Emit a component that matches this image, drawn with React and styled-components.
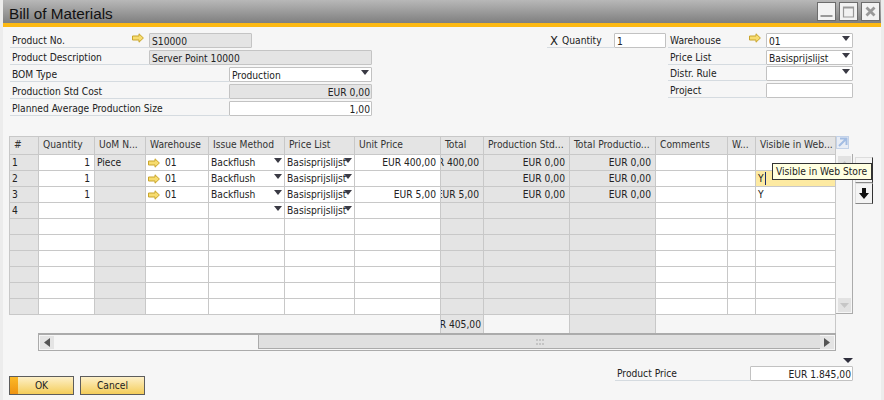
import React from 'react'
import styled, { createGlobalStyle } from 'styled-components'

const GlobalStyle = createGlobalStyle`
  html, body {
    margin: 0;
    padding: 0;
    background: #f6f6f6;
  }
  body {
    font-family: 'DejaVu Sans Condensed', 'DejaVu Sans', sans-serif;
    font-stretch: condensed;
    font-size: 10.2px;
    color: #222;
  }
`

const columns = [
  { title: '#', width: 29, gray: true },
  { title: 'Quantity', width: 56 },
  { title: 'UoM N...', width: 51, gray: true },
  { title: 'Warehouse', width: 63 },
  { title: 'Issue Method', width: 76 },
  { title: 'Price List', width: 70 },
  { title: 'Unit Price', width: 86 },
  { title: 'Total', width: 43, gray: true },
  { title: 'Production Std...', width: 86, gray: true },
  { title: 'Total Productio...', width: 86, gray: true },
  { title: 'Comments', width: 72 },
  { title: 'W...', width: 28 },
  { title: 'Visible in Web...', width: 80 },
]

const rows = [
  { n: 1, qty: 1, uom: 'Piece', wh: '01', issue: 'Backflush', list: 'Basisprijslijst', price: 'EUR 400,00', total: 'EUR 400,00', std: 'EUR 0,00', totalProd: 'EUR 0,00' },
  { n: 2, qty: 1, wh: '01', issue: 'Backflush', list: 'Basisprijslijst', std: 'EUR 0,00', totalProd: 'EUR 0,00', web: 'Y', active: true },
  { n: 3, qty: 1, wh: '01', issue: 'Backflush', list: 'Basisprijslijst', price: 'EUR 5,00', total: 'EUR 5,00', std: 'EUR 0,00', totalProd: 'EUR 0,00', web: 'Y' },
  { n: 4, list: 'Basisprijslijst', dropdown: true },
  {}, {}, {}, {}, {}, {},
]

const gridTemplate = columns.map((c) => `${c.width}px`).join(' ')

const LinkArrow = ({ className }) => (
  <svg className={className} width='12' height='10' viewBox='0 0 12 10'>
    <path
      d='M0.5 3 H7 V0.8 L11.4 5 L7 9.2 V7 H0.5 Z'
      fill='#f7dc6f'
      stroke='#c9a52c'
      strokeWidth='1'
    />
  </svg>
)

const Caret = ({ color = '#3a3a44', size = 8 }) => (
  <svg width={size} height='5' viewBox='0 0 9 5' preserveAspectRatio='none'>
    <path d='M0 0 H9 L4.5 5 Z' fill={color} />
  </svg>
)

const App = () => {
  return (
    <Window>
      <GlobalStyle />
      <TitleBar>
        <Title>Bill of Materials</Title>
        <WindowButtons>
          <WinButton>
            <svg width='13' height='13' viewBox='0 0 13 13'>
              <rect x='0.5' y='10' width='12' height='2' fill='#999' />
            </svg>
          </WinButton>
          <WinButton>
            <svg width='13' height='13' viewBox='0 0 13 13'>
              <path d='M1.5 2 H11.5 V12 H1.5 Z M1.5 3 H11.5' fill='none' stroke='#999' strokeWidth='1.2' />
            </svg>
          </WinButton>
          <WinButton>
            <svg width='13' height='13' viewBox='0 0 13 13'>
              <path d='M2.5 2.5 L10.5 10.5 M10.5 2.5 L2.5 10.5' stroke='#999' strokeWidth='2.8' />
            </svg>
          </WinButton>
        </WindowButtons>
      </TitleBar>
      <AccentStrip />

      <Form>
        <LeftForm>
          <FormRow>
            <Label $width={139}>Product No.</Label>
            <ArrowSlot><LinkArrow /></ArrowSlot>
            <Field $gray $width={103}>S10000</Field>
          </FormRow>
          <FormRow>
            <Label $width={139}>Product Description</Label>
            <Field $gray $width={223}>Server Point 10000</Field>
          </FormRow>
          <FormRow>
            <Label $width={219}>BOM Type</Label>
            <Field $width={143}>Production<FieldCaret><Caret /></FieldCaret></Field>
          </FormRow>
          <FormRow>
            <Label $width={219}>Production Std Cost</Label>
            <Field $gray $right $width={143}>EUR 0,00</Field>
          </FormRow>
          <FormRow>
            <Label $width={219}>Planned Average Production Size</Label>
            <Field $right $width={143}>1,00</Field>
          </FormRow>
        </LeftForm>

        <RightForm>
          <FormRow>
            <TimesSign>X</TimesSign>
            <Label $width={54}>Quantity</Label>
            <Field $width={52}>1</Field>
            <Gap />
            <Label $width={98}>Warehouse</Label>
            <ArrowSlot><LinkArrow /></ArrowSlot>
            <Field $width={87}>01<FieldCaret><Caret /></FieldCaret></Field>
          </FormRow>
          <IndentRow>
            <Label $width={98}>Price List</Label>
            <Field $width={87}>Basisprijslijst<FieldCaret><Caret /></FieldCaret></Field>
          </IndentRow>
          <IndentRow>
            <Label $width={98}>Distr. Rule</Label>
            <Field $width={87}><FieldCaret><Caret /></FieldCaret></Field>
          </IndentRow>
          <IndentRow>
            <Label $width={98}>Project</Label>
            <Field $width={87} />
          </IndentRow>
        </RightForm>
      </Form>

      <MatrixArea>
        <Matrix>
          {columns.map((c) => (
            <HeaderCell key={c.title}>{c.title}</HeaderCell>
          ))}
          {rows.map((r, i) => (
            <React.Fragment key={i}>
              <Cell $gray>{r.n}</Cell>
              <Cell $right>{r.qty}</Cell>
              <Cell $gray>{r.uom}</Cell>
              <Cell>
                {r.wh && <CellArrow><LinkArrow /></CellArrow>}
                {r.wh}
              </Cell>
              <Cell>
                {r.issue}
                {(r.issue || r.dropdown) && <CellCaret><Caret /></CellCaret>}
              </Cell>
              <Cell>
                {r.list}
                {r.list && <CellCaret><Caret /></CellCaret>}
              </Cell>
              <Cell $right>{r.price}</Cell>
              <Cell $gray $right>{r.total}</Cell>
              <Cell $gray $right>{r.std}</Cell>
              <Cell $gray $right>{r.totalProd}</Cell>
              <Cell />
              <Cell />
              <Cell $active={r.active}>
                {r.web}
                {r.active && <TextCaret />}
              </Cell>
            </React.Fragment>
          ))}
          <FooterBlank $span={7} />
          <FooterCell $gray>EUR 405,00</FooterCell>
          <FooterCell />
          <FooterCell $gray />
          <FooterEnd />
        </Matrix>

        <VerticalScroll>
          <ExpandIcon width='13' height='13' viewBox='0 0 13 13'>
            <rect x='0.5' y='0.5' width='12' height='12' fill='#e8edf5' stroke='#c3d2e8' />
            <path d='M4 2.5 H10.5 V9 M10 3 L3 10' fill='none' stroke='#a3bde3' strokeWidth='2' />
          </ExpandIcon>
          <ScrollTrack>
            <ScrollEnd><UpCaret><Caret color='#c6c6c6' size={9} /></UpCaret></ScrollEnd>
            <ScrollEnd><Caret color='#c6c6c6' size={9} /></ScrollEnd>
          </ScrollTrack>
        </VerticalScroll>

        <SideButtons>
          <SideButton $height={26} />
          <SideButton $height={21}>
            <svg width='10' height='11' viewBox='0 0 10 11'>
              <path d='M3 0 H7 V5 H10 L5 11 L0 5 H3 Z' fill='#111' />
            </svg>
          </SideButton>
        </SideButtons>

        <Tooltip>Visible in Web Store</Tooltip>
      </MatrixArea>

      <HorizontalScroll>
        <ArrowButton>
          <svg width='6' height='9' viewBox='0 0 6 9'><path d='M6 0 V9 L0 4.5 Z' fill='#555' /></svg>
        </ArrowButton>
        <ScrollSpace />
        <ScrollThumb>
          <Grip width='8' height='6' viewBox='0 0 8 6'>
            <path d='M0 0h2v2h-2z M3 0h2v2h-2z M6 0h2v2h-2z M0 4h2v2h-2z M3 4h2v2h-2z M6 4h2v2h-2z' fill='#c4c4c4' />
          </Grip>
        </ScrollThumb>
        <ArrowButton>
          <svg width='6' height='9' viewBox='0 0 6 9'><path d='M0 0 V9 L6 4.5 Z' fill='#555' /></svg>
        </ArrowButton>
      </HorizontalScroll>

      <Bottom>
        <Buttons>
          <ActionButton $primary>OK</ActionButton>
          <ActionButton>Cancel</ActionButton>
        </Buttons>
        <PriceBlock>
          <PriceCaret><Caret color='#2f2f3d' size={10} /></PriceCaret>
          <FormRow>
            <Label $width={135}>Product Price</Label>
            <Field $right $width={103}>EUR 1.845,00</Field>
          </FormRow>
        </PriceBlock>
      </Bottom>
    </Window>
  )
}

export default App

const Window = styled.div`
  width: 884px;
  height: 400px;
  overflow: hidden;
  background: #f6f6f6;
  border-left: 3px solid #ececec;
  border-right: 3px solid #ececec;
  box-sizing: border-box;
`

const TitleBar = styled.div`
  height: 23px;
  margin: 0 -3px;
  padding: 0 4px 0 9px;
  display: flex;
  align-items: center;
  justify-content: space-between;
  background: linear-gradient(#b8b8b8, #7f7f7f);
`

const Title = styled.div`
  font-family: 'Liberation Sans', Arial, sans-serif;
  font-stretch: normal;
  font-size: 15.3px;
  line-height: 18px;
  padding-top: 4px;
  color: #111;
`

const WindowButtons = styled.div`
  display: flex;
  gap: 3px;
  align-items: flex-start;
  height: 21px;
  padding-top: 2px;
`

const WinButton = styled.div`
  width: 19px;
  height: 19px;
  box-sizing: border-box;
  border: 1px solid #6c6c6c;
  background: #f2f2f2;
  display: flex;
  align-items: center;
  justify-content: center;
`

const AccentStrip = styled.div`
  height: 4px;
  margin: 0 -3px;
  background: #fdb913;
`

const Form = styled.div`
  display: flex;
  justify-content: space-between;
  padding: 4px 28px 0 7px;
  height: 103px;
  box-sizing: border-box;
`

const LeftForm = styled.div`
  display: flex;
  flex-direction: column;
`

const RightForm = styled.div`
  display: flex;
  flex-direction: column;
`

const FormRow = styled.div`
  display: flex;
  align-items: flex-end;
  height: 17px;
  position: relative;
`

const IndentRow = styled(FormRow)`
  padding-left: 121px;
  height: 16.6px;
`

const Label = styled.div`
  width: ${(p) => p.$width}px;
  height: 15px;
  line-height: 16px;
  padding-left: 2px;
  box-sizing: border-box;
  border-bottom: 1px solid #d5dbe0;
  white-space: nowrap;
`

const ArrowSlot = styled.div`
  width: 17px;
  height: 15px;
  margin-left: -17px;
  display: flex;
  align-items: flex-start;
  flex-shrink: 0;
  svg {
    display: block;
  }
`

const Field = styled.div`
  width: ${(p) => p.$width}px;
  height: 15px;
  line-height: 15px;
  padding: 0 1px 0 2px;
  box-sizing: border-box;
  border: 1px solid ${(p) => (p.$gray ? '#c4c4c4' : '#c2c2c2')};
  border-radius: 1px;
  background: ${(p) => (p.$gray ? '#e4e4e4' : '#fff')};
  text-align: ${(p) => (p.$right ? 'right' : 'left')};
  position: relative;
  white-space: nowrap;
`

const FieldCaret = styled.span`
  position: absolute;
  right: 2px;
  top: 2px;
  line-height: 0;
`

const TimesSign = styled.div`
  width: 13px;
  height: 15px;
  box-sizing: border-box;
  padding-left: 3px;
  border-bottom: 1px solid #d5dbe0;
  font-size: 13px;
  line-height: 15px;
  color: #222;
`

const Gap = styled.div`
  width: 2px;
`

const MatrixArea = styled.div`
  display: flex;
  align-items: flex-start;
  margin-left: 6px;
  margin-top: 6px;
  position: relative;
`

const Matrix = styled.div`
  display: grid;
  grid-template-columns: ${gridTemplate};
  grid-template-rows: 18px repeat(10, 16px) 18px;
  border-top: 1px solid #c8c8c8;
  border-left: 1px solid #c8c8c8;
`

const HeaderCell = styled.div`
  background: #e4e4e4;
  border-right: 1px solid #c8c8c8;
  border-bottom: 1px solid #c8c8c8;
  padding: 0 4px;
  line-height: 16px;
  color: #333;
  white-space: nowrap;
  overflow: hidden;
`

const Cell = styled.div`
  background: ${(p) => (p.$active ? '#fdeaa2' : p.$gray ? '#e4e4e4' : '#fff')};
  border-right: 1px solid #c8c8c8;
  border-bottom: 1px solid #c8c8c8;
  padding: 0 ${(p) => (p.$right ? '4px' : '2px')} 0 2px;
  line-height: 15px;
  display: flex;
  align-items: center;
  justify-content: ${(p) => (p.$right ? 'flex-end' : 'flex-start')};
  overflow: hidden;
  white-space: nowrap;
  position: relative;
`

const CellArrow = styled.span`
  width: 17px;
  flex-shrink: 0;
  line-height: 0;
`

const CellCaret = styled.span`
  position: absolute;
  right: 2px;
  top: 3px;
  line-height: 0;
`

const TextCaret = styled.span`
  width: 1px;
  height: 13px;
  margin-left: 1px;
  background: #1a2a6c;
`

const FooterBlank = styled.div`
  grid-column: span ${(p) => p.$span};
  margin-left: -1px;
  background: #f6f6f6;
  border-right: 1px solid #c8c8c8;
`

const FooterEnd = styled.div`
  grid-column: span 3;
  background: #f6f6f6;
  border-right: 1px solid #c8c8c8;
`

const FooterCell = styled.div`
  background: ${(p) => (p.$gray ? '#e4e4e4' : '#f6f6f6')};
  border-right: 1px solid #c8c8c8;
  padding-right: 2px;
  display: flex;
  align-items: center;
  justify-content: flex-end;
  overflow: hidden;
  white-space: nowrap;
`

const VerticalScroll = styled.div`
  width: 17px;
  height: 178px;
  position: relative;
  display: flex;
  flex-direction: column;
`

const ExpandIcon = styled.svg`
  position: absolute;
  left: 0;
  top: 0;
`

const ScrollTrack = styled.div`
  margin-top: 18px;
  height: 160px;
  box-sizing: border-box;
  border-right: 1px solid #ababab;
  border-bottom: 1px solid #ababab;
  padding: 2px 1px 1px 2px;
  display: flex;
  flex-direction: column;
  justify-content: space-between;
`

const ScrollEnd = styled.div`
  height: 14px;
  background: #e2e2e2;
  display: flex;
  align-items: center;
  justify-content: center;
`

const UpCaret = styled.span`
  transform: rotate(180deg);
  line-height: 0;
`

const SideButtons = styled.div`
  margin-left: 2px;
  margin-top: 21px;
  display: flex;
  flex-direction: column;
`

const SideButton = styled.div`
  width: 18px;
  height: ${(p) => p.$height}px;
  box-sizing: border-box;
  background: #f4f4f4;
  border-right: 1px solid #333;
  border-bottom: 1px solid #888;
  border-top: 1px solid #ddd;
  border-left: 1px solid #ddd;
  display: flex;
  align-items: center;
  justify-content: center;
`

const Tooltip = styled.div`
  position: absolute;
  left: 763px;
  top: 27px;
  width: 100px;
  height: 17px;
  box-sizing: border-box;
  border: 1px solid #333;
  background: #ffffe1;
  padding-left: 3px;
  line-height: 15px;
  white-space: nowrap;
`

const HorizontalScroll = styled.div`
  margin-left: 35px;
  width: 798px;
  height: 18px;
  box-sizing: border-box;
  border: 1px solid #ababab;
  border-top: 2px solid #ababab;
  display: flex;
  align-items: stretch;
  padding: 0 1px 1px 1px;
  background: #f6f6f6;
`

const ArrowButton = styled.div`
  width: 14px;
  margin: 1px 0 0;
  background: #e4e4e4;
  display: flex;
  align-items: center;
  justify-content: center;
`

const ScrollSpace = styled.div`
  width: 204px;
`

const ScrollThumb = styled.div`
  flex: 1;
  background: #e0e0e0;
  border-left: 1px solid #ababab;
  border-bottom: 1px solid #ababab;
  display: flex;
  align-items: center;
  justify-content: center;
`

const Grip = styled.svg`
  display: block;
`

const Bottom = styled.div`
  display: flex;
  justify-content: space-between;
  align-items: flex-end;
  padding: 0 28px 5px 6px;
  margin-top: 7px;
  height: 42px;
  box-sizing: border-box;
`

const Buttons = styled.div`
  display: flex;
  gap: 6px;
`

const ActionButton = styled.div`
  width: 65px;
  height: 19px;
  box-sizing: border-box;
  border: 1px solid #5d5d5d;
  background: ${(p) =>
    p.$primary
      ? 'linear-gradient(#fbb927, #ef9412) left / 8px 100% no-repeat, linear-gradient(#fdf0c8, #f4cd5a)'
      : 'linear-gradient(#fdf0c8, #f4cd5a)'};
  text-align: center;
  line-height: 18px;
  color: #222;
`

const PriceBlock = styled.div`
  display: flex;
  flex-direction: column;
  align-items: flex-end;
  margin-bottom: 14px;
`

const PriceCaret = styled.div`
  line-height: 0;
  margin-bottom: 1px;
`
